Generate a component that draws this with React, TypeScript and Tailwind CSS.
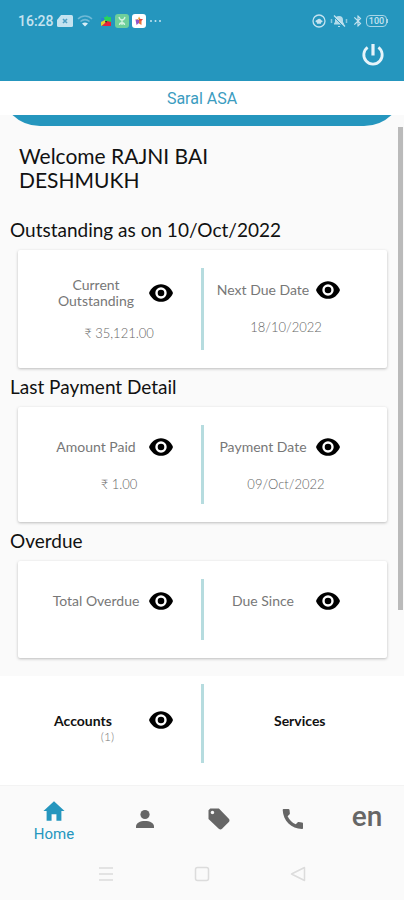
import React, { useState } from "react";
import { IoMdHome, IoMdPricetag } from "react-icons/io";
import { MdBluetooth } from "react-icons/md";
import clsx from "clsx";

interface FieldInterface {
  label: string;
  value?: string;
  className?: string;
}

const EyeButton = ({ label }: { label: string }) => (
  <button
    type="button"
    aria-label={`Show ${label}`}
    className="flex h-[26px] w-[26px] shrink-0 items-center justify-center"
  >
    <svg viewBox="0 0 24 18" className="h-[18px] w-6">
      <path d="M12 .2C6.500.2 2 3.700 0 9c2 5.300 6.500 8.800 12 8.800S22 14.300 24 9C22 3.700 17.500.2 12 .2z" fill="#000" />
      <circle cx="12" cy="9" r="4.500" fill="#000" stroke="#fff" strokeWidth="2.400" />
    </svg>
  </button>
);

const Field = ({ label, value, className }: FieldInterface) => (
  <div className={clsx("pt-[27px]", className)}>
    <div className="w-[126px]">
      <div className="flex min-h-[26px] items-center gap-1">
        <p className="w-24 text-center text-[14px] leading-4 text-[#777]">
          {label}
        </p>
        <EyeButton label={label} />
      </div>
      <p className="mt-4 pl-4 text-center text-[13px] leading-4 font-light text-[#666]">
        {value}
      </p>
    </div>
  </div>
);

const Divider = ({ className }: { className?: string }) => (
  <div className={clsx("bg-[#b6dcdf]", className)} />
);

interface SectionInterface {
  title: string;
  left: FieldInterface;
  right: FieldInterface;
  cardClass: string;
}

const Section = ({ title, left, right, cardClass }: SectionInterface) => (
  <section>
    <h2 className="px-[10px] pt-[7px] pb-[9px] text-[19px] leading-[23px] text-[#111]">
      {title}
    </h2>
    <div
      className={clsx(
        "mr-[17px] ml-[18px] grid grid-cols-[1fr_3px_1fr] rounded-xs bg-white shadow-[0_1px_3px_rgba(0,0,0,0.25)]",
        cardClass
      )}
    >
      <Field {...left} className="pl-[30px]" />
      <Divider className="my-[18px]" />
      <Field {...right} className="pl-[11px]" />
    </div>
  </section>
);

const StatusBar = () => (
  <div className="flex h-[42px] items-center justify-between pr-4 pl-[18px] text-[#c5e3f0]">
    <div className="flex items-center">
      <span className="font-[Roboto,sans-serif] text-[14px] leading-4 font-medium">
        16:28
      </span>
      <svg viewBox="0 0 16 12" className="ml-[3px] h-3 w-4">
        <path d="M4 0h10.500a1.500 1.500 0 0 1 1.500 1.500v9a1.500 1.500 0 0 1-1.500 1.500h-13A1.500 1.500 0 0 1 0 10.500V5z" fill="#c5e3f0" />
        <path d="m6 4 4 4m0-4-4 4" stroke="#4f9fc4" strokeWidth="1.600" />
      </svg>
      <svg viewBox="0 0 16 14" className="ml-1 h-[14px] w-4" fill="none">
        <path d="M1 5c4-4 10-4 14 0M3.500 7.500c3-2.500 6-2.500 9 0" stroke="#6fb9d6" strokeWidth="1.500" />
        <path d="M5 9.500c2-1.500 4-1.500 6 0L8 12.500z" fill="#d8eef7" />
      </svg>
      <svg viewBox="0 0 12 14" className="ml-[7px] h-[14px] w-3">
        <path d="M1 4h4v4H1z" fill="#2c7fd0" />
        <path d="M4 3h2l1-2 1 2h3v5H5z" fill="#27d45c" />
        <path d="M1 12V8l4-2 1 3z" fill="#e6d231" />
        <path d="M2 12l5-5 4 1v4z" fill="#e5223c" />
        <path d="M5 7h2l-1 2z" fill="#222" />
      </svg>
      <svg viewBox="0 0 14 14" className="ml-[3px] size-[14px]">
        <rect width="14" height="14" rx="3" fill="#6fcf9b" />
        <path d="M4 3c1 4 5 4 6 0M7 6v5M4.500 11c0-3 5-3 5 0" fill="none" stroke="#d6f5e2" strokeWidth="1.300" />
      </svg>
      <svg viewBox="0 0 14 14" className="ml-[3px] size-[14px]">
        <rect width="14" height="14" rx="3" fill="#fff" />
        <path d="M7 2.500 8.500 5H7L6 6 3 5h3z" fill="#f0a52f" />
        <path d="M7 5h4L9 7.500H7z" fill="#e5453f" />
        <path d="m3.500 5.500 3.500.5v3l-2.500 2z" fill="#9255c9" />
        <path d="m7 6.500 2.500.5v4L7 9.500z" fill="#e8763a" />
      </svg>
      <svg viewBox="0 0 12 2" className="ml-1 h-[2px] w-3" fill="#c5e3f0">
        <circle cx="1" cy="1" r="1" />
        <circle cx="5.500" cy="1" r="1" />
        <circle cx="10" cy="1" r="1" />
      </svg>
    </div>
    <div className="flex items-center">
      <svg viewBox="0 0 14 14" className="size-[14px]" fill="none">
        <circle cx="7" cy="7" r="6" stroke="#c5e3f0" strokeWidth="1.300" />
        <path d="M3.500 8a2 2 0 0 1 1.800-2.200 2.200 2.200 0 0 1 4 .4A1.500 1.500 0 0 1 10.500 8L9 8.500v1.300H5V8.500z" fill="#c5e3f0" />
      </svg>
      <svg viewBox="0 0 18 14" className="ml-1 h-[14px] w-[18px]">
        <path d="M4 9.500 5 8V6a4 4 0 0 1 8 0v2l1.500 2.500H4zM8 12h2v1H8z" fill="#b4dbea" />
        <path d="M1.500 5v4M16.500 5v4" stroke="#8ac7de" strokeWidth="1.500" />
        <path d="m3.500 2.500 10 10" stroke="#2596be" strokeWidth="1" />
        <path d="m4 1.500 11 11" stroke="#c5e3f0" strokeWidth="1.300" />
      </svg>
      <MdBluetooth className="ml-[3px] size-[14px]" />
      <span className="ml-px flex h-3 w-[21px] items-center justify-center rounded-[4px] border border-[#a8d5e6] font-[Roboto,sans-serif] text-[9px] leading-3 font-medium">
        100
      </span>
      <span className="h-1 w-px bg-[#a8d5e6]" />
    </div>
  </div>
);

const PersonIcon = () => (
  <svg viewBox="0 0 24 24" className="size-6" fill="currentColor">
    <circle cx="12" cy="7.500" r="4.600" />
    <path d="M3 21v-1.500C3 16 7 14 12 14s9 2 9 5.500V21z" />
  </svg>
);

const PhoneIcon = () => (
  <svg viewBox="0 0 24 24" className="size-6" fill="currentColor">
    <path d="M2.500 2h5c.6 0 .9.300 1 .9l.4 3.600c0 .5-.1.800-.5 1.100L6.600 9.200c1.700 3.700 4.500 6.400 8.200 8.100l1.700-1.700c.3-.4.7-.5 1.200-.5l3.300.4c.6.1 1 .4 1 1v4.500c0 .6-.4 1-1 1C10.500 22 2 13.500 1.700 3c0-.6.300-1 .8-1z" />
  </svg>
);

const tabs = [
  { name: "Profile", icon: <PersonIcon /> },
  { name: "Offers", icon: <IoMdPricetag className="size-7 -scale-x-100" /> },
  { name: "Call", icon: <PhoneIcon /> },
];

const App = () => {
  const [activeTab, setActiveTab] = useState<string>("Home");

  return (
    <div className="flex min-h-screen flex-col bg-[#fafafa] font-[Lato,sans-serif]">
      <header className="bg-[#2596be]">
        <StatusBar />
        <div className="flex h-[39px] justify-end pr-[18px]">
          <button type="button" aria-label="Log out" className="h-[26px]">
            <svg viewBox="0 0 26 26" className="size-[26px]" fill="none" stroke="#e6f4fa" strokeWidth="2.800">
              <path d="M13 2v11.500" strokeWidth="3.200" />
              <path d="M7.600 5.400a9.200 9.200 0 1 0 10.800 0" />
            </svg>
          </button>
        </div>
      </header>
      <h1 className="bg-white pt-2 pb-[6px] text-center font-[Roboto,sans-serif] text-[16px] leading-5 text-[#3b9cbf]">
        Saral ASA
      </h1>

      <main className="relative flex-1">
        <div className="flex h-[11px] items-end overflow-hidden">
          <div className="h-10 w-full shrink-0 rounded-b-[40px] bg-[#2596be]" />
        </div>
        <p className="mt-[18px] mb-[19px] w-60 pl-[19px] text-[21px] leading-6 text-[#111]">
          Welcome RAJNI BAI DESHMUKH
        </p>
        <Section
          title="Outstanding as on 10/Oct/2022"
          left={{ label: "Current Outstanding", value: "₹ 35,121.00" }}
          right={{ label: "Next Due Date", value: "18/10/2022" }}
          cardClass="min-h-[118px]"
        />
        <Section
          title="Last Payment Detail"
          left={{ label: "Amount Paid", value: "₹ 1.00" }}
          right={{ label: "Payment Date", value: "09/Oct/2022" }}
          cardClass="min-h-[115px]"
        />
        <Section
          title="Overdue"
          left={{ label: "Total Overdue" }}
          right={{ label: "Due Since" }}
          cardClass="min-h-[97px]"
        />
        <div className="absolute top-3 right-px h-[89%] w-[5px] bg-[#bababa]" />
      </main>

      <div className="mt-[18px] grid h-[109px] grid-cols-[1fr_3px_1fr] bg-white text-[14px] font-bold text-[#111]">
        <div className="flex items-start pt-[31px] pl-[54px]">
          <div className="w-[94px] pt-[6px] leading-4">
            <p>Accounts</p>
            <p className="w-[60px] text-right text-[12px] font-light text-[#777]">
              (1)
            </p>
          </div>
          <EyeButton label="Accounts" />
        </div>
        <Divider className="mt-2 mb-[22px]" />
        <div className="pt-[37px] pr-2 text-center leading-4">Services</div>
      </div>

      <nav className="grid h-[63px] grid-cols-[1.46fr_1fr_1fr_1fr_1fr] items-center justify-items-center border-t border-[#f3f3f3] text-[#666]">
        <button
          type="button"
          onClick={() => setActiveTab("Home")}
          className={clsx(
            "flex flex-col items-center pt-2",
            activeTab === "Home" && "text-[#2596be]"
          )}
        >
          <IoMdHome className="size-[26px]" />
          <span className="font-[Roboto,sans-serif] text-[15px] leading-5">
            Home
          </span>
        </button>
        {tabs.map(({ name, icon }) => (
          <button
            key={name}
            type="button"
            aria-label={name}
            onClick={() => setActiveTab(name)}
            className={clsx(
              "pt-1",
              activeTab === name && "text-[#2596be]"
            )}
          >
            {icon}
          </button>
        ))}
        <button
          type="button"
          className="font-[Roboto,sans-serif] text-[28px] leading-8 font-medium"
        >
          en
        </button>
      </nav>

      <div className="flex h-[52px] items-center justify-center gap-20 text-[#dcdcdc]">
        <button type="button" aria-label="Recent apps">
          <svg viewBox="0 0 16 16" className="size-4" stroke="currentColor" strokeWidth="1.500">
            <path d="M1 2h14M1 8h14M1 14h14" />
          </svg>
        </button>
        <button type="button" aria-label="Home screen">
          <svg viewBox="0 0 16 16" className="size-4" fill="none" stroke="currentColor" strokeWidth="1.500">
            <rect x="1.500" y="1.500" width="13" height="13" rx="2" />
          </svg>
        </button>
        <button type="button" aria-label="Back">
          <svg viewBox="0 0 16 16" className="size-4" fill="none" stroke="currentColor" strokeWidth="1.500" strokeLinejoin="round">
            <path d="M14.500 1.500v13L1.500 8z" />
          </svg>
        </button>
      </div>
    </div>
  );
};

export default App;
